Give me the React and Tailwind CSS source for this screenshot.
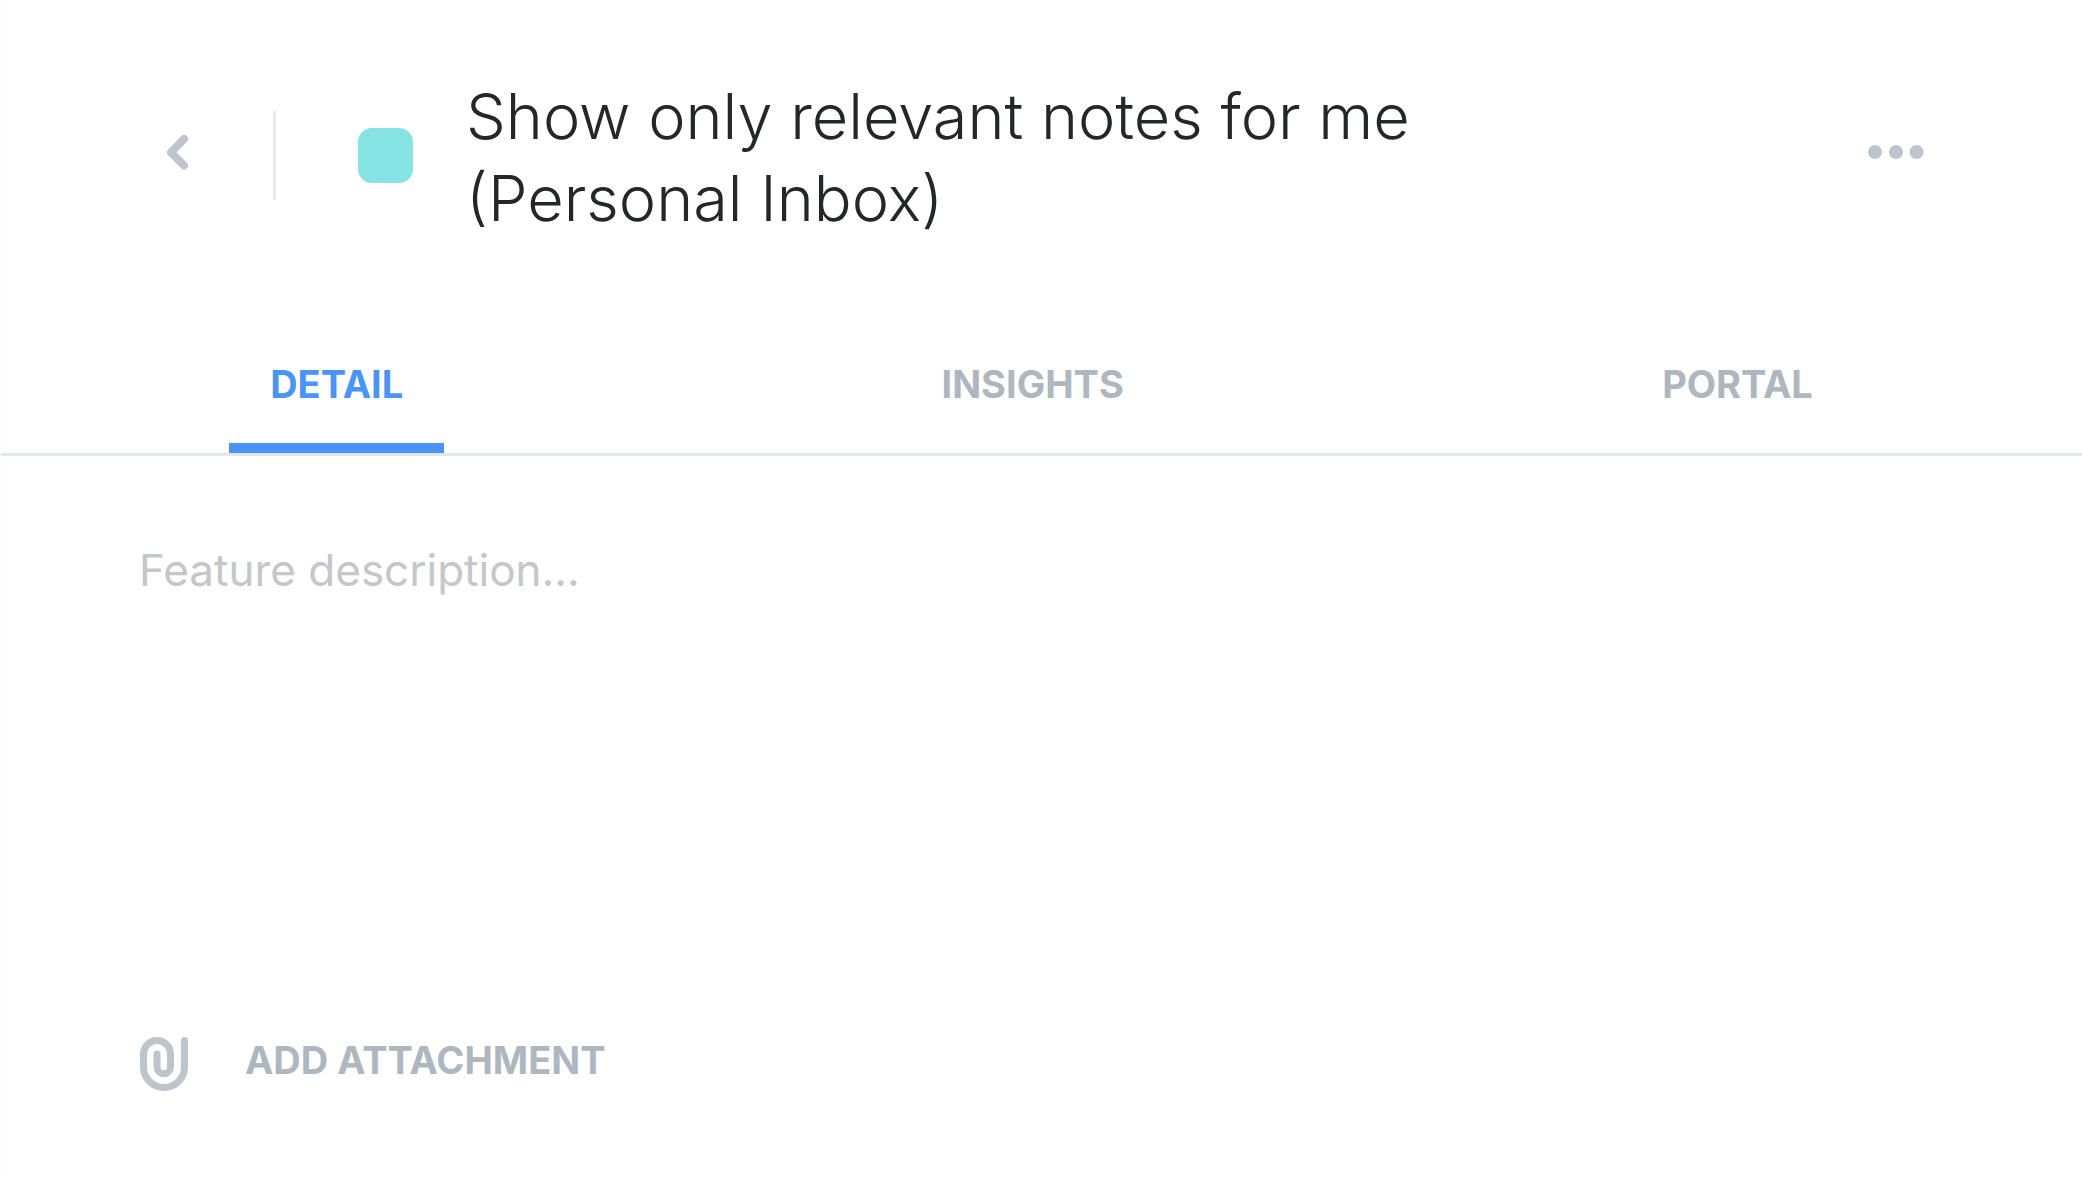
import { useState } from "react"

const TABS = ["Detail", "Insights", "Portal"]

// ── Icons ─────────────────────────────────────────────────────────────────────
function ChevronIcon() {
  return (
    <svg viewBox="0 0 22 36" className="w-[22px] h-9" fill="none" stroke="#BEC4CC" strokeWidth="8"
      strokeLinecap="round" strokeLinejoin="round" aria-hidden="true">
      <path d="M18 5L5 18.5l13 13" />
    </svg>
  )
}

function DotsIcon() {
  return (
    <svg viewBox="0 0 56 14" className="w-14 h-3.5" fill="#BEC4CC" aria-hidden="true">
      <circle cx="7" cy="7" r="7" />
      <circle cx="28" cy="7" r="7" />
      <circle cx="48.5" cy="7" r="7" />
    </svg>
  )
}

function PaperclipIcon() {
  return (
    <svg viewBox="0 0 49 56" className="w-[49px] h-14" fill="none" stroke="#BEC4CC" strokeWidth="7"
      strokeLinecap="round" strokeLinejoin="round" aria-hidden="true">
      <path d="M45.5 4.5V31a20.5 20.5 0 0 1-41 0V18a13.5 13.5 0 0 1 27 0v13a6.75 6.75 0 0 1-13.5 0V18" />
    </svg>
  )
}

// ── Main App ──────────────────────────────────────────────────────────────────
export default function App() {
  const [tab, setTab] = useState("Detail")
  const [description, setDescription] = useState("")

  return (
    <div className="min-h-screen flex flex-col bg-white border-l border-gray-50 font-['Inter',sans-serif]">

      {/* ── Header ── */}
      <header className="flex items-start pl-[165px] pr-[158px] pt-[75px] pb-[120px]">
        <button type="button" aria-label="Back" className="mt-[59px] cursor-pointer">
          <ChevronIcon />
        </button>
        <div className="w-[3px] h-[89px] mt-9 ml-[85px] shrink-0 bg-[#E9EAEC]" />
        <span className="w-[55px] h-[55px] mt-[53px] ml-[82px] shrink-0 rounded-[14px] bg-[#85E3E3]" />
        <h1 className="ml-[53px] max-w-[1100px] text-[63px] leading-[82px] font-light text-[#252628]">
          Show only relevant notes for me (Personal Inbox)
        </h1>
        <button type="button" aria-label="More" className="ml-auto mt-[70px] cursor-pointer">
          <DotsIcon />
        </button>
      </header>

      {/* ── Tabs ── */}
      <nav role="tablist" className="flex justify-around border-b-3 border-[#E3E6EA]">
        {TABS.map(name => (
          <button
            key={name}
            type="button"
            role="tab"
            aria-selected={tab === name}
            onClick={() => setTab(name)}
            className={`px-[41px] pt-px pb-[35px] border-b-10 text-[38px] leading-12 font-bold uppercase cursor-pointer ${
              tab === name ? "text-[#4A94F8] border-[#4A94F8]" : "text-[#AEB6BF] border-transparent"
            }`}
          >
            {name}
          </button>
        ))}
      </nav>

      {/* ── Description ── */}
      <main className="flex-1 flex flex-col px-[138px] pt-[84px] pb-[86px]">
        <textarea
          aria-label="Feature description"
          placeholder="Feature description..."
          value={description}
          onChange={e => setDescription(e.target.value)}
          className="flex-1 w-full resize-none outline-none text-[44px] leading-[60px] text-[#252628] placeholder:text-[#C5C6CA]"
        />
        <button type="button" className="flex items-start gap-[57px] self-start text-[38px] leading-12 font-bold uppercase text-[#AEB6BF] cursor-pointer">
          <PaperclipIcon />
          Add attachment
        </button>
      </main>

    </div>
  )
}
